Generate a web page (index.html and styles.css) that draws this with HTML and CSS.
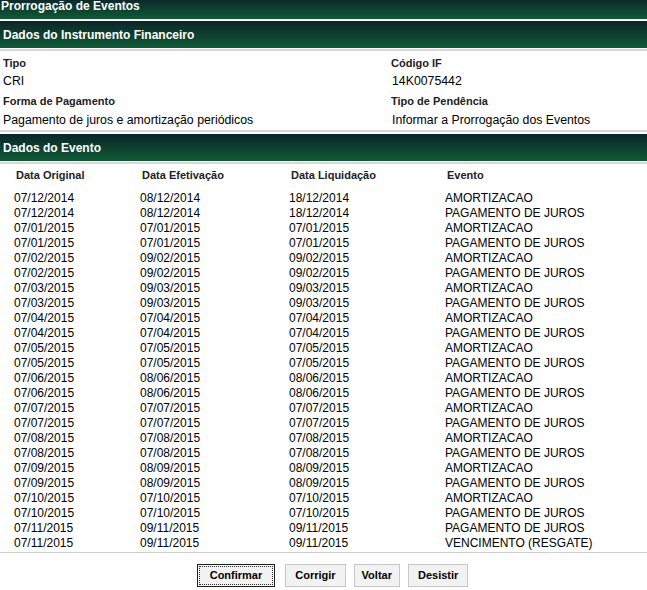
FILE: index.html
```html
<!DOCTYPE html>
<html lang="pt-BR">
<head>
<meta charset="utf-8">
<title>Prorrogação de Eventos</title>
<link rel="stylesheet" href="styles.css">
</head>
<body>
<div class="page">
  <div class="titlebar">Prorrogação de Eventos</div>
  <div class="section-head">Dados do Instrumento Financeiro</div>
  <div class="info">
    <div class="info-col">
      <div class="label">Tipo</div>
      <div class="value">CRI</div>
      <div class="label second">Forma de Pagamento</div>
      <div class="value">Pagamento de juros e amortização periódicos</div>
    </div>
    <div class="info-col right">
      <div class="label">Código IF</div>
      <div class="value">14K0075442</div>
      <div class="label second">Tipo de Pendência</div>
      <div class="value">Informar a Prorrogação dos Eventos</div>
    </div>
  </div>
  <div class="section-head">Dados do Evento</div>
  <div class="events">
    <table class="grid">
      <thead>
        <tr><th class="c1">Data Original</th><th class="c2">Data Efetivação</th><th class="c3">Data Liquidação</th><th class="c4">Evento</th></tr>
      </thead>
      <tbody>
        <tr><td>07/12/2014</td><td>08/12/2014</td><td>18/12/2014</td><td>AMORTIZACAO</td></tr>
        <tr><td>07/12/2014</td><td>08/12/2014</td><td>18/12/2014</td><td>PAGAMENTO DE JUROS</td></tr>
        <tr><td>07/01/2015</td><td>07/01/2015</td><td>07/01/2015</td><td>AMORTIZACAO</td></tr>
        <tr><td>07/01/2015</td><td>07/01/2015</td><td>07/01/2015</td><td>PAGAMENTO DE JUROS</td></tr>
        <tr><td>07/02/2015</td><td>09/02/2015</td><td>09/02/2015</td><td>AMORTIZACAO</td></tr>
        <tr><td>07/02/2015</td><td>09/02/2015</td><td>09/02/2015</td><td>PAGAMENTO DE JUROS</td></tr>
        <tr><td>07/03/2015</td><td>09/03/2015</td><td>09/03/2015</td><td>AMORTIZACAO</td></tr>
        <tr><td>07/03/2015</td><td>09/03/2015</td><td>09/03/2015</td><td>PAGAMENTO DE JUROS</td></tr>
        <tr><td>07/04/2015</td><td>07/04/2015</td><td>07/04/2015</td><td>AMORTIZACAO</td></tr>
        <tr><td>07/04/2015</td><td>07/04/2015</td><td>07/04/2015</td><td>PAGAMENTO DE JUROS</td></tr>
        <tr><td>07/05/2015</td><td>07/05/2015</td><td>07/05/2015</td><td>AMORTIZACAO</td></tr>
        <tr><td>07/05/2015</td><td>07/05/2015</td><td>07/05/2015</td><td>PAGAMENTO DE JUROS</td></tr>
        <tr><td>07/06/2015</td><td>08/06/2015</td><td>08/06/2015</td><td>AMORTIZACAO</td></tr>
        <tr><td>07/06/2015</td><td>08/06/2015</td><td>08/06/2015</td><td>PAGAMENTO DE JUROS</td></tr>
        <tr><td>07/07/2015</td><td>07/07/2015</td><td>07/07/2015</td><td>AMORTIZACAO</td></tr>
        <tr><td>07/07/2015</td><td>07/07/2015</td><td>07/07/2015</td><td>PAGAMENTO DE JUROS</td></tr>
        <tr><td>07/08/2015</td><td>07/08/2015</td><td>07/08/2015</td><td>AMORTIZACAO</td></tr>
        <tr><td>07/08/2015</td><td>07/08/2015</td><td>07/08/2015</td><td>PAGAMENTO DE JUROS</td></tr>
        <tr><td>07/09/2015</td><td>08/09/2015</td><td>08/09/2015</td><td>AMORTIZACAO</td></tr>
        <tr><td>07/09/2015</td><td>08/09/2015</td><td>08/09/2015</td><td>PAGAMENTO DE JUROS</td></tr>
        <tr><td>07/10/2015</td><td>07/10/2015</td><td>07/10/2015</td><td>AMORTIZACAO</td></tr>
        <tr><td>07/10/2015</td><td>07/10/2015</td><td>07/10/2015</td><td>PAGAMENTO DE JUROS</td></tr>
        <tr><td>07/11/2015</td><td>09/11/2015</td><td>09/11/2015</td><td>PAGAMENTO DE JUROS</td></tr>
        <tr><td>07/11/2015</td><td>09/11/2015</td><td>09/11/2015</td><td>VENCIMENTO (RESGATE)</td></tr>
      </tbody>
    </table>
  </div>
  <div class="actions">
    <button class="btn btn-default"><span class="focus">Confirmar</span></button>
    <button class="btn">Corrigir</button>
    <button class="btn btn-narrow">Voltar</button>
    <button class="btn">Desistir</button>
  </div>
</div>
</body>
</html>
```

FILE: styles.css
```css
html, body {
  margin: 0;
  padding: 0;
  background: #ffffff;
}

body {
  font-family: "Liberation Sans", Arial, sans-serif;
  font-size: 12px;
  color: #000;
}

.page {
  width: 647px;
}

.titlebar {
  height: 19px;
  line-height: 13px;
  padding-left: 1px;
  font-weight: bold;
  font-size: 12px;
  color: #fff;
  background: linear-gradient(to bottom, #0c2a2a 0%, #0d4530 55%, #0f5a36 100%);
  margin-bottom: 2px;
}

.section-head {
  height: 27px;
  line-height: 28px;
  padding-left: 3px;
  font-weight: bold;
  font-size: 12px;
  color: #fff;
  background: linear-gradient(to bottom, #0c2628 0%, #0d3f2f 50%, #0f5a36 100%);
}

.info {
  display: grid;
  grid-template-columns: 388px 1fr;
  border-top: 2px solid #d8d8d8;
  border-bottom: 2px solid #d8d8d8;
  margin-top: 1px;
  margin-bottom: 2px;
}

.info-col {
  padding-left: 3px;
}

.label {
  font-weight: bold;
  font-size: 11px;
  color: #222;
  line-height: 18px;
  padding-top: 3px;
}

.label.second {
  padding-top: 1px;
  line-height: 19px;
}

.value {
  font-size: 12.3px;
  line-height: 19px;
}

.info-col.right .value {
  padding-left: 1px;
}

.events {
  border-top: 2px solid #d8d8d8;
  border-bottom: 1px solid #cfcfcf;
  margin-top: 1px;
  padding-bottom: 1px;
}

.grid {
  border-collapse: collapse;
  width: 100%;
}

.grid th {
  font-weight: bold;
  font-size: 11px;
  color: #222;
  text-align: left;
  padding: 4px 0 8px 16px;
  line-height: 15px;
}

.grid td {
  font-size: 12px;
  line-height: 15px;
  padding: 0 0 0 14px;
  white-space: nowrap;
}

.grid th.c1 { width: 110px; }
.grid th.c2 { width: 133px; }
.grid th.c3 { width: 140px; }

.actions {
  display: flex;
  justify-content: center;
  gap: 8px;
  padding: 11px 0 0 18px;
}

.btn {
  font-family: "Liberation Sans", Arial, sans-serif;
  font-weight: bold;
  font-size: 11px;
  color: #000;
  background: #f2f2f2;
  border: 1px solid #c8c8c8;
  height: 23px;
  padding: 0 9px;
  margin: 0;
  line-height: 19px;
}

.btn-narrow {
  padding: 0 7px;
}

.btn-default {
  border: 1px solid #222;
  padding: 1px;
  margin-right: 2px;
}

.btn-default .focus {
  display: block;
  border: 1px dotted #333;
  padding: 0 10px;
  line-height: 17px;
}
```
